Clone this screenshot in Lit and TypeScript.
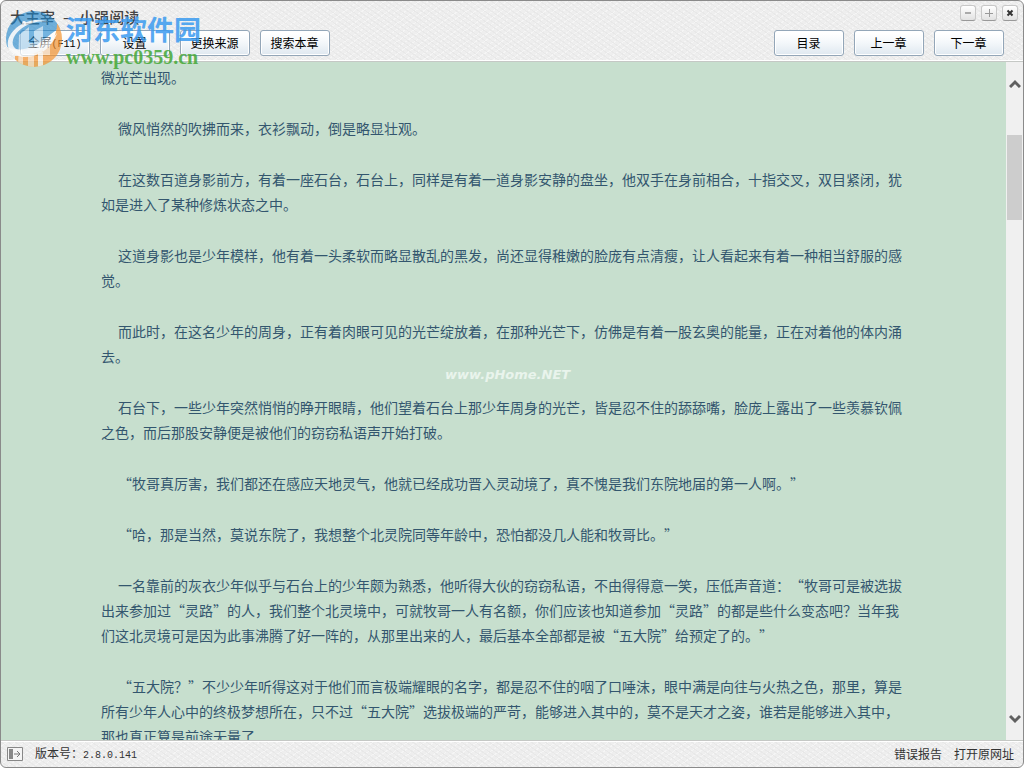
import { LitElement, html, css, svg } from "lit";
import { customElement, state } from "lit/decorators.js";

const PARAGRAPHS = [
  "微风悄然的吹拂而来，衣衫飘动，倒是略显壮观。",
  "在这数百道身影前方，有着一座石台，石台上，同样是有着一道身影安静的盘坐，他双手在身前相合，十指交叉，双目紧闭，犹如是进入了某种修炼状态之中。",
  "这道身影也是少年模样，他有着一头柔软而略显散乱的黑发，尚还显得稚嫩的脸庞有点清瘦，让人看起来有着一种相当舒服的感觉。",
  "而此时，在这名少年的周身，正有着肉眼可见的光芒绽放着，在那种光芒下，仿佛是有着一股玄奥的能量，正在对着他的体内涌去。",
  "石台下，一些少年突然悄悄的睁开眼睛，他们望着石台上那少年周身的光芒，皆是忍不住的舔舔嘴，脸庞上露出了一些羡慕钦佩之色，而后那股安静便是被他们的窃窃私语声开始打破。",
  "“牧哥真厉害，我们都还在感应天地灵气，他就已经成功晋入灵动境了，真不愧是我们东院地届的第一人啊。”",
  "“哈，那是当然，莫说东院了，我想整个北灵院同等年龄中，恐怕都没几人能和牧哥比。”",
  "一名靠前的灰衣少年似乎与石台上的少年颇为熟悉，他听得大伙的窃窃私语，不由得得意一笑，压低声音道：“牧哥可是被选拔出来参加过“灵路”的人，我们整个北灵境中，可就牧哥一人有名额，你们应该也知道参加“灵路”的都是些什么变态吧？当年我们这北灵境可是因为此事沸腾了好一阵的，从那里出来的人，最后基本全部都是被“五大院”给预定了的。”",
  "“五大院？”不少少年听得这对于他们而言极端耀眼的名字，都是忍不住的咽了口唾沫，眼中满是向往与火热之色，那里，算是所有少年人心中的终极梦想所在，只不过“五大院”选拔极端的严苛，能够进入其中的，莫不是天才之姿，谁若是能够进入其中，那也真正算是前途无量了",
];

const logo = svg`
  <clipPath id="disc"><circle cx="33" cy="31" r="28"/></clipPath>
  <g clip-path="url(#disc)">
    <path d="M4 2h58v16C50 24 44 33 33 38 22 43 12 42 4 38Z" fill="#1f86cc" opacity=".85"/>
    <path d="M62 16v44H14V48c14 0 24-3 33-11 6-5 9-13 9-21Z" fill="#f5922c" opacity=".95"/>
    <path d="M50 15C36 10 16 19 12 32c-2 8 5 12 14 10 12-2 24-9 30-17-4 13-17 24-31 24C13 49 5 42 7 33 10 18 32 6 50 15Z" fill="#fff" opacity=".9"/>
    <path d="M18 27 28 19v16h5V23l9-5v13l7-3v19h-7V37l-9 3v20h-6V42l-5 1v17h-5Z" fill="#fff" opacity=".6"/>
    <path d="M37 44h5v16h-5Z" fill="#fff" opacity=".85"/>
  </g>
  <circle cx="23" cy="15" r="2" fill="#fff"/>`;

@customElement("app-root")
export class AppRoot extends LitElement {
  @state() private paragraphs = PARAGRAPHS;

  static styles = css`
    :host { display: block; height: 100vh; }
    * { box-sizing: border-box; }
    .window {
      position: relative; display: flex; flex-direction: column; height: 100%;
      border: 1px solid #8a8a8a; border-radius: 6px; overflow: hidden;
      color: #333; font: 12px/16px "Noto Sans CJK SC", sans-serif;
      background-color: #eee;
      background-image: repeating-linear-gradient(35deg, #e8e8e8 0 1px, transparent 1px 4px),
        repeating-linear-gradient(145deg, #f5f5f5 0 1px, transparent 1px 5px);
    }
    .head { flex: none; border-bottom: 1px solid #c5c8c5; box-shadow: inset 0 -1px #fff; padding-bottom: 5px; }
    .titlebar { display: flex; justify-content: space-between; align-items: flex-end; height: 28px; padding: 0 5px 2px 9px; }
    .title { display: flex; gap: 8px; margin: 0; font-size: 15px; line-height: 20px; font-weight: 500; color: #444; }
    .controls { display: flex; align-self: flex-start; gap: 5px; padding-top: 4px; }
    .control {
      display: grid; place-items: center; width: 16px; height: 16px; padding: 0;
      border: 1px solid #c8c8c8; border-bottom-color: #999; border-radius: 3px;
      background: linear-gradient(#fff, #e2e2e2);
    }
    .toolbar { display: flex; justify-content: space-between; padding: 1px 19px 0; }
    .group { display: flex; gap: 10px; }
    .button {
      width: 70px; height: 26px; padding: 0 1px 0 0; color: #000; font: inherit;
      border: 1px solid #93a6b8; border-radius: 3px;
      background: linear-gradient(#fff 10%, #f3f7fa 50%, #dfe8f0);
      box-shadow: inset 0 0 0 1px #fff;
    }
    .mono { font: 10px/16px "Liberation Mono", monospace; }
    .reader { position: relative; flex: 1; min-height: 0; display: flex; background: #c7dfce; }
    .text {
      flex: 1; min-width: 0; overflow: hidden; padding: 3px 102px 0 100px;
      color: #33566e; font-size: 14px; line-height: 25px; text-spacing-trim: space-all;
    }
    .text p { margin: 0 0 26px; text-indent: 17px; }
    .text .lead { text-indent: 0; }
    .scroll { flex: none; width: 17px; display: flex; flex-direction: column; align-items: center; padding: 16px 0; background: #f0f0f0; }
    .thumb { width: 15px; height: 85px; margin: 47px 0 auto; background: #cdcdcd; }
    .arrow { display: block; }
    .foot {
      flex: none; display: flex; justify-content: space-between; align-items: center;
      height: 27px; padding: 0 9px 0 6px; border-top: 1px solid #c5c8c5; box-shadow: inset 0 1px #fff;
    }
    .version { display: flex; align-items: center; gap: 12px; }
    .toggle { display: block; padding: 0; border: 0; background: none; height: 16px; }
    .links { display: flex; gap: 12px; }
    .link { color: #333; text-decoration: none; }
    .brand { position: absolute; left: 0; top: 7px; display: flex; pointer-events: none; opacity: .85; }
    .emblem { opacity: .85; }
    .brandtext { padding-top: 3px; }
    .cn { font-size: 27px; line-height: 36px; font-weight: 700; color: #3b9bf0; }
    .url { font: 700 20px/20px "Liberation Serif", serif; color: #45a838; }
    .mark { position: absolute; left: 444px; top: 304px; font: italic 700 13px/18px "DejaVu Sans", sans-serif; color: #e9f4ec; pointer-events: none; }
  `;

  render() {
    return html`
      <div class="window">
        <header class="head">
          <div class="titlebar">
            <h1 class="title"><span>大主宰</span><span>–</span><span>小强阅读</span></h1>
            <div class="controls">
              <button class="control" aria-label="最小化"><svg width="10" height="10"><path d="M2 5h6" stroke="#aaa" stroke-width="2"/></svg></button>
              <button class="control" aria-label="最大化"><svg width="10" height="10"><path d="M1 5.500h8M5.500 1v8" stroke="#999"/></svg></button>
              <button class="control" aria-label="关闭"><svg width="10" height="10"><path d="m2.500 2.500 5 5m0-5-5 5" stroke="#333" stroke-width="2"/></svg></button>
            </div>
          </div>
          <nav class="toolbar">
            <div class="group">
              <button class="button">全屏<span class="mono">(F11)</span></button>
              <button class="button">设置</button>
              <button class="button">更换来源</button>
              <button class="button">搜索本章</button>
            </div>
            <div class="group">
              <button class="button">目录</button>
              <button class="button">上一章</button>
              <button class="button">下一章</button>
            </div>
          </nav>
        </header>
        <main class="reader">
          <article class="text">
            <p class="lead">微光芒出现。</p>
            ${this.paragraphs.map((p) => html`<p>${p}</p>`)}
          </article>
          <div class="scroll">
            <svg class="arrow" width="12" height="10"><path d="M1 9 6 4l5 5" fill="none" stroke="#606060" stroke-width="3"/></svg>
            <div class="thumb"></div>
            <svg class="arrow" width="12" height="10"><path d="m1 2 5 5 5-5" fill="none" stroke="#606060" stroke-width="3"/></svg>
          </div>
          <div class="mark">www.pHome.NET</div>
        </main>
        <footer class="foot">
          <div class="version">
            <button class="toggle" aria-label="展开侧栏"><svg width="16" height="16"><path d="M.5 1.500h15v13H.5Z" fill="#f4f4f4" stroke="#888"/><path d="M2 3h4v10H2Z" fill="#888"/><path d="M7 8h6M10 5l3 3-3 3" fill="none" stroke="#777"/></svg></button>
            <span>版本号：<span class="mono">2.8.0.141</span></span>
          </div>
          <div class="links"><a class="link" href="#report">错误报告</a><a class="link" href="#source">打开原网址</a></div>
        </footer>
        <div class="brand">
          <svg class="emblem" width="65" height="62">${logo}</svg>
          <div class="brandtext"><div class="cn">河东软件园</div><div class="url">www.pc0359.cn</div></div>
        </div>
      </div>`;
  }
}
